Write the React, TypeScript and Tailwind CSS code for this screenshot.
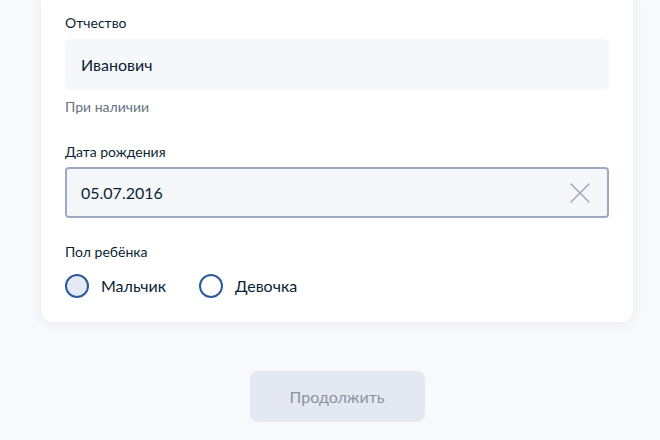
import { useState } from "react";

function ClearIcon() {
  return (
    <svg width="20" height="20" viewBox="0 0 20 20" fill="none">
      <path d="M1 1L19 19M19 1L1 19" stroke="#a3abba" strokeWidth="1.6" strokeLinecap="round" />
    </svg>
  );
}

function Radio({ label, checked, onClick }: { label: string; checked: boolean; onClick: () => void }) {
  return (
    <button type="button" onClick={onClick} className="flex items-center gap-[12px]">
      <span
        className={`size-6 rounded-full border-2 border-[#2e5b9a] ${checked ? "bg-[#e3e9f5]" : "bg-white"}`}
      />
      <span className="text-[16px] leading-6 text-[#0b1f33]">{label}</span>
    </button>
  );
}

export default function App() {
  const [gender, setGender] = useState("boy");
  const [date, setDate] = useState("05.07.2016");

  return (
    <div
      className="h-[440px] w-[660px] overflow-hidden bg-[#f7f9fc] pl-[41px] pr-[27px]"
      style={{ fontFamily: "Lato, 'Noto Sans', sans-serif" }}
    >
      <div className="-mt-[11px] rounded-xl bg-white px-6 pb-6 pt-6 shadow-[0_2px_12px_rgba(40,60,100,0.07)]">
        <div className="text-[14px] leading-5 text-[#0b1f33]">Отчество</div>
        <div className="mt-[6px] flex h-[51px] items-center rounded-[6px] bg-[#f5f7fa] px-4 text-[16px] text-[#0b1f33]">
          Иванович
        </div>
        <div className="mt-[9px] text-[14px] leading-4 text-[#66727f]">При наличии</div>

        <div className="mt-[27px] text-[14px] leading-5 text-[#0b1f33]">Дата рождения</div>
        <div className="mt-[5px] flex h-[51px] items-center rounded-[4px] border-2 border-[#9eaac0] bg-[#f5f7fa] pl-[14px] pr-[17px]">
          <span className="flex-1 text-[16px] text-[#0b1f33]">{date}</span>
          <button type="button" onClick={() => setDate("")}>
            <ClearIcon />
          </button>
        </div>

        <div className="mt-[24px] text-[14px] leading-5 text-[#0b1f33]">Пол ребёнка</div>
        <div className="mt-[12px] flex gap-[33px]">
          <Radio label="Мальчик" checked={gender === "boy"} onClick={() => setGender("boy")} />
          <Radio label="Девочка" checked={gender === "girl"} onClick={() => setGender("girl")} />
        </div>
      </div>

      <div className="mt-[49px] flex justify-center">
        <button
          type="button"
          className="h-[51px] w-[175px] rounded-lg bg-[#e4e8f1] text-[16px] text-[#8a93a3]"
        >
          Продолжить
        </button>
      </div>
    </div>
  );
}
